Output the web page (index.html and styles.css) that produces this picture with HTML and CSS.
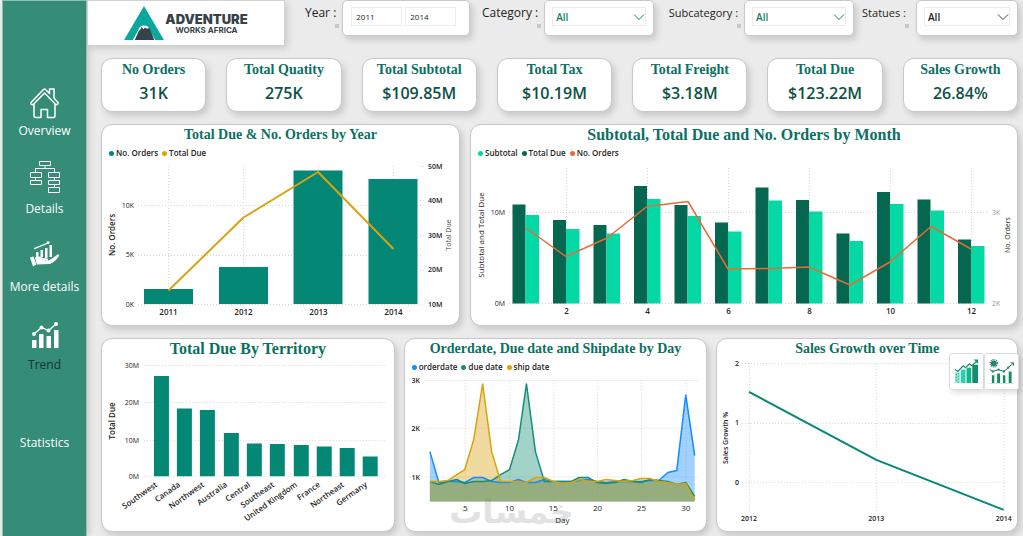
FILE: index.html
```html
<!DOCTYPE html>
<html lang="en">
<head>
    <meta charset="UTF-8">
    <meta name="viewport" content="width=device-width, initial-scale=1.0">
    <title>Adventure Works Africa - Sales Dashboard</title>
    <link rel="stylesheet" href="styles.css">
</head>
<body>
    <nav class="sidebar">
        <a href="#overview" class="nav-item">
            <svg class="nav-icon" viewBox="0 0 32 32" fill="none" stroke="currentColor" stroke-width="1.5" stroke-linejoin="round">
                <path d="M2 16.500 L14.500 3.500 Q15.500 2.500 16.500 3.500 L20.500 7.500 V3 H25 V12 L29 16.500 Q29.500 18.500 27 18.800 L15.500 7 L4 18.800 Q1 18.500 2 16.500 Z"/>
                <path d="M5 18 V30 Q5 31.500 6.500 31.500 H12 V23.500 H18.500 V31.500 H24.500 Q26 31.500 26 30 V18"/>
            </svg>
            <span>Overview</span>
        </a>
        <a href="#details" class="nav-item">
            <svg class="nav-icon" viewBox="0 3 32 32" fill="none" stroke="currentColor" stroke-width="1">
                <path d="M10.500 .5h11v4h-11z M1.500 11.500h11v5h-11z M1.500 19.500h11v4h-11z M19.500 11.500h11v5h-11z M19.500 19.500h11v4h-11z M19.500 26.500h11v5h-11z"/>
                <path d="M16 4.500V7.500M6.500 11.500V7.500H25.500V11.500M6.500 16.500V19.500M25.500 16.500V19.500M25.500 23.500V26.500"/>
            </svg>
            <span>Details</span>
        </a>
        <a href="#more" class="nav-item">
            <svg class="nav-icon" viewBox="0 0 32 32" fill="currentColor">
                <path d="M5 6 L18 .8 L17.500 -.5 L21 -.5 L19.500 2.500 L18.800 1.800 L5.500 7.200 Z"/>
                <path d="M7 10h2.500v5H7z M11.500 8h2.500v7h-2.500z M16 6h2.500v10H16z M20.500 3h2.500v12h-2.500z"/>
                <path d="M1 15.500 L4.500 14.500 L7.500 22.500 L4 24.500 Z"/>
                <path d="M6 15.500 Q10 13.500 14 16 L18 16.500 Q20 17 18.500 18.500 L14 18.800 Q20 19.500 23 16.500 L28.500 12.500 Q31 12 30 14 Q26 20 21 22 L8 22.500 Z"/>
            </svg>
            <span>More details</span>
        </a>
        <a href="#trend" class="nav-item active">
            <svg class="nav-icon" viewBox="0 0 32 32" fill="currentColor">
                <rect x="3" y="20" width="4.500" height="8" rx=".5"/>
                <rect x="10" y="14" width="4.500" height="14" rx=".5"/>
                <rect x="17.500" y="16" width="4.500" height="12" rx=".5"/>
                <rect x="25" y="10" width="4.500" height="18" rx=".5"/>
                <polyline points="5,14 12.500,7.500 19.500,10.500 27,4" fill="none" stroke="currentColor" stroke-width="1.300"/>
                <circle cx="5" cy="14" r="2"/><circle cx="12.500" cy="7.500" r="2"/>
                <circle cx="19.500" cy="10.500" r="2"/><circle cx="27" cy="4" r="2"/>
            </svg>
            <span>Trend</span>
        </a>
        <a href="#statistics" class="nav-item">
            <span>Statistics</span>
        </a>
    </nav>

    <div class="page">
        <header class="topbar">
            <div class="logo">
                <svg class="logo-mark" viewBox="0 0 42 36">
                    <path d="M20.500 0 L41 35 H32 L26.500 25 Q25.500 20 20.500 20 Q15.500 20 14.500 25 L9 35 H0 Z" fill="#08a99c"/>
                    <path d="M11 35 L15 26 L17 24 L18 21.500 L20 24 L21.500 22 L23.500 23.500 L26 22.500 L28 27 L31 35 Z" fill="#37424a"/>
                </svg>
                <div class="logo-text">
                    <strong>ADVENTURE</strong>
                    <span>WORKS AFRICA</span>
                </div>
            </div>

            <form class="filters">
                <div class="filter">
                    <label for="year-from">Year :</label>
                    <div class="filter-box filter-years">
                        <input type="text" id="year-from" value="2011">
                        <input type="text" id="year-to" value="2014" aria-label="Year to">
                    </div>
                </div>
                <div class="filter">
                    <label for="category">Category :</label>
                    <div class="filter-box">
                        <select id="category"><option>All</option></select>
                        <svg class="chevron" viewBox="0 0 12 8"><path d="M1 1.500 L6 6.500 L11 1.500"/></svg>
                    </div>
                </div>
                <div class="filter">
                    <label for="subcategory" class="label-sm">Subcategory :</label>
                    <div class="filter-box">
                        <select id="subcategory"><option>All</option></select>
                        <svg class="chevron" viewBox="0 0 12 8"><path d="M1 1.500 L6 6.500 L11 1.500"/></svg>
                    </div>
                </div>
                <div class="filter filter-last">
                    <label for="status" class="label-sm">Statues :</label>
                    <div class="filter-box filter-status">
                        <select id="status"><option>All</option></select>
                        <svg class="chevron" viewBox="0 0 12 8"><path d="M1 1.500 L6 6.500 L11 1.500"/></svg>
                    </div>
                </div>
            </form>
        </header>

        <main class="content">
            <section class="kpis">
                <div class="card kpi"><h2>No Orders</h2><p>31K</p></div>
                <div class="card kpi"><h2>Total Quatity</h2><p>275K</p></div>
                <div class="card kpi"><h2>Total Subtotal</h2><p>$109.85M</p></div>
                <div class="card kpi"><h2>Total Tax</h2><p>$10.19M</p></div>
                <div class="card kpi"><h2>Total Freight</h2><p>$3.18M</p></div>
                <div class="card kpi"><h2>Total Due</h2><p>$123.22M</p></div>
                <div class="card kpi"><h2>Sales Growth</h2><p>26.84%</p></div>
            </section>

            <section class="charts-top">
                <article class="card">
                    <h2>Total Due &amp; No. Orders by Year</h2>
                    <ul class="legend">
                        <li class="c-teal">No. Orders</li>
                        <li class="c-gold">Total Due</li>
                    </ul>
                    <svg class="chart" viewBox="102 161 357 164">
                        <path class="grid" d="M138 205.500H422M138 255.500H422M138 304.500H422M168.500 166V304M243.500 166V304M318.500 166V304M393.500 166V304M420 166.500H424M420 200.500H424M420 235.500H424M420 270.500H424"/>
                        <g fill="#058776">
                            <rect x="144" y="289" width="49" height="15"/>
                            <rect x="219" y="267" width="49" height="37"/>
                            <rect x="293.500" y="170.500" width="49" height="133.500"/>
                            <rect x="368.500" y="179" width="49" height="125"/>
                        </g>
                        <polyline class="line gold" points="168.500,290.500 243.500,217.500 318,172 393.500,249"/>
                        <g class="dark small end">
                            <text x="134" y="208">10K</text>
                            <text x="134" y="257">5K</text>
                            <text x="134" y="307">0K</text>
                        </g>
                        <g class="bold small">
                            <text x="428" y="169">50M</text>
                            <text x="428" y="203">40M</text>
                            <text x="428" y="238">30M</text>
                            <text x="428" y="272">20M</text>
                            <text x="428" y="307">10M</text>
                        </g>
                        <g class="bold mid">
                            <text x="168.500" y="315">2011</text>
                            <text x="243.500" y="315">2012</text>
                            <text x="318.500" y="315">2013</text>
                            <text x="393.500" y="315">2014</text>
                        </g>
                        <text class="bold axis" transform="translate(115 235) rotate(-90)">No. Orders</text>
                        <text class="soft axis small" transform="translate(451 235) rotate(-90)">Total Due</text>
                    </svg>
                </article>

                <article class="card">
                    <h2 class="title-lg">Subtotal, Total Due and No. Orders by Month</h2>
                    <ul class="legend">
                        <li class="c-mint">Subtotal</li>
                        <li class="c-forest">Total Due</li>
                        <li class="c-orange">No. Orders</li>
                    </ul>
                    <svg class="chart" viewBox="471 161 546 164">
                        <path class="grid" d="M509 212.500H988M509 303.500H988M566.500 168V303M647.500 168V303M728.500 168V303M809.500 168V303M890.500 168V303M971.500 168V303"/>
                        <path fill="#05674f" d="M512.500 303.500V204.500h13V303.500z M553 303.500V220h13V303.500z M593.500 303.500V225h13V303.500z M634 303.500V186h13V303.500z M674.500 303.500V205h13V303.500z M715 303.500V222.500h13V303.500z M755.500 303.500V187.500h13V303.500z M796 303.500V200h13V303.500z M836.500 303.500V233.500h13V303.500z M877 303.500V192h13V303.500z M917.500 303.500V199.500h13V303.500z M958 303.500V239.500h13V303.500z"/>
                        <path fill="#04d9a5" d="M525.500 303.500V215h13.500V303.500z M566 303.500V229h13.500V303.500z M606.500 303.500V233.500h13.500V303.500z M647 303.500V199h13.500V303.500z M687.500 303.500V216h13.500V303.500z M728 303.500V231.500h13.500V303.500z M768.500 303.500V200.500h13.500V303.500z M809 303.500V211.500h13.500V303.500z M849.500 303.500V241h13.500V303.500z M890 303.500V204h13.500V303.500z M930.500 303.500V210.500h13.500V303.500z M971 303.500V246h13.500V303.500z"/>
                        <polyline class="line orange" points="526,228 566,256.500 607,238 647,206.500 688,201.500 728,269 769,268.500 809,267 850,285 890,262 931,226.500 971,249"/>
                        <g class="dark small end">
                            <text x="505" y="215">10M</text>
                            <text x="505" y="306">0M</text>
                        </g>
                        <g class="pale small">
                            <text x="992" y="215">3K</text>
                            <text x="992" y="306">2K</text>
                        </g>
                        <g class="bold mid">
                            <text x="566.500" y="314">2</text>
                            <text x="647.500" y="314">4</text>
                            <text x="728.500" y="314">6</text>
                            <text x="809.500" y="314">8</text>
                            <text x="890.500" y="314">10</text>
                            <text x="971.500" y="314">12</text>
                        </g>
                        <text class="dark axis" transform="translate(484 235) rotate(-90)">Subtotal and Total Due</text>
                        <text class="dark axis small" transform="translate(1010 235) rotate(-90)">No. Orders</text>
                    </svg>
                </article>
            </section>

            <section class="charts-bottom">
                <article class="card">
                    <h2 class="title-lg">Total Due By Territory</h2>
                    <svg class="chart" viewBox="102 359 292 172">
                        <path class="grid" d="M144 365.500H386M144 402.500H386M144 440.500H386M144 476.500H386"/>
                        <path fill="#058776" d="M154 476.500V376h15V476.500z M177 476.500V408.500h15V476.500z M200 476.500V410h15V476.500z M224 476.500V433h15V476.500z M247 476.500V443.500h15V476.500z M270 476.500V444h15V476.500z M294 476.500V445h15V476.500z M317 476.500V446.500h15V476.500z M340 476.500V448h15V476.500z M363 476.500V456.500h15V476.500z"/>
                        <g class="dark small end">
                            <text x="139" y="368">30M</text>
                            <text x="139" y="405">20M</text>
                            <text x="139" y="443">10M</text>
                            <text x="139" y="479">0M</text>
                        </g>
                        <g class="bold end">
                            <text transform="translate(158 486) rotate(-35)">Southwest</text>
                            <text transform="translate(181 486) rotate(-35)">Canada</text>
                            <text transform="translate(205 486) rotate(-35)">Northwest</text>
                            <text transform="translate(228 486) rotate(-35)">Australia</text>
                            <text transform="translate(251 486) rotate(-35)">Central</text>
                            <text transform="translate(275 486) rotate(-35)">Southeast</text>
                            <text transform="translate(298 486) rotate(-35)">United Kingdom</text>
                            <text transform="translate(321 486) rotate(-35)">France</text>
                            <text transform="translate(345 486) rotate(-35)">Northeast</text>
                            <text transform="translate(368 486) rotate(-35)">Germany</text>
                        </g>
                        <text class="bold axis" transform="translate(115 421) rotate(-90)">Total Due</text>
                    </svg>
                </article>

                <article class="card">
                    <h2>Orderdate, Due date and Shipdate by Day</h2>
                    <ul class="legend">
                        <li class="c-blue">orderdate</li>
                        <li class="c-green">due date</li>
                        <li class="c-gold">ship date</li>
                    </ul>
                    <svg class="chart" viewBox="405 375 303 156">
                        <path class="rule" d="M425 380.500H700M425 428.500H700M425 477.500H700"/>
                        <path class="grid" d="M465.500 380V502M510.500 380V502M554.500 380V502M598.500 380V502M642.500 380V502M687.500 380V502"/>
                        <text class="watermark" x="512" y="524">خمسات</text>
                        <g fill-opacity=".4">
                            <polygon fill="#118dff" points="430,502 430,452 439,483 448,482 457,482 465,483 474,478 483,478 492,482 501,483 510,483 519,480 527,483 536,483 545,480 554,482 563,482 572,482 580,481 589,480 598,482 607,483 616,482 625,482 634,482 642,482 651,481 660,481 669,473 678,471 687,395 696,456 696,502"/>
                            <polygon fill="#178f75" points="430,502 430,482 439,485 448,482 457,480 465,484 474,482 483,482 492,481 501,475 510,470 519,440 527,384 536,452 545,482 554,482 563,482 572,482 580,478 589,478 598,483 607,484 616,483 625,480 634,482 642,483 651,480 660,481 669,482 678,485 687,483 696,497 696,502"/>
                            <polygon fill="#d9a310" points="430,502 430,482 439,482 448,481 457,475 465,470 474,440 483,384 492,452 501,482 510,482 519,482 527,483 536,478 545,478 554,482 563,484 572,483 580,480 589,482 598,482 607,480 616,481 625,482 634,481 642,479 651,479 660,482 669,483 678,485 687,484 696,501 696,502"/>
                        </g>
                        <polyline class="line thin blue" points="430,452 439,483 448,482 457,482 465,483 474,478 483,478 492,482 501,483 510,483 519,480 527,483 536,483 545,480 554,482 563,482 572,482 580,481 589,480 598,482 607,483 616,482 625,482 634,482 642,482 651,481 660,481 669,473 678,471 687,395 696,456"/>
                        <polyline class="line thin green" points="430,482 439,485 448,482 457,480 465,484 474,482 483,482 492,481 501,475 510,470 519,440 527,384 536,452 545,482 554,482 563,482 572,482 580,478 589,478 598,483 607,484 616,483 625,480 634,482 642,483 651,480 660,481 669,482 678,485 687,483 696,497"/>
                        <polyline class="line thin gold" points="430,482 439,482 448,481 457,475 465,470 474,440 483,384 492,452 501,482 510,482 519,482 527,483 536,478 545,478 554,482 563,484 572,483 580,480 589,482 598,482 607,480 616,481 625,482 634,481 642,479 651,479 660,482 669,483 678,485 687,484 696,501"/>
                        <g class="bold small end">
                            <text x="420" y="383">3K</text>
                            <text x="420" y="431">2K</text>
                            <text x="420" y="480">1K</text>
                        </g>
                        <g class="dark mid">
                            <text x="465.500" y="512">5</text>
                            <text x="510" y="512">10</text>
                            <text x="554" y="512">15</text>
                            <text x="598.500" y="512">20</text>
                            <text x="642.500" y="512">25</text>
                            <text x="687" y="512">30</text>
                            <text x="563" y="524">Day</text>
                        </g>
                    </svg>
                </article>

                <article class="card">
                    <h2>Sales Growth over Time</h2>
                    <svg class="chart" viewBox="717 359 300 172">
                        <path class="grid" d="M742 363.500H1008M742 423.500H1008M742 482.500H1008M749.500 363V512M876.500 363V512M1004.500 363V512"/>
                        <polyline class="line teal" points="749,392 876.500,460 1004,510"/>
                        <g class="bold small mid">
                            <text x="737" y="366">2</text>
                            <text x="737" y="425">1</text>
                            <text x="737" y="485">0</text>
                            <text x="749" y="521">2012</text>
                            <text x="876.500" y="521">2013</text>
                            <text x="1004" y="521">2014</text>
                        </g>
                        <text class="bold axis small" transform="translate(728 438) rotate(-90)">Sales Growth %</text>
                    </svg>
                    <div class="switcher">
                        <button type="button" aria-label="Growth chart">
                            <svg viewBox="0 0 26 26">
                                <rect x="1" y="14" width="5" height="11" fill="#7fe9d4"/>
                                <rect x="7" y="11" width="5" height="14" fill="#35d9b3"/>
                                <rect x="13" y="9" width="5" height="16" fill="#12bd92"/>
                                <rect x="19" y="6" width="6" height="19" fill="#158c6e"/>
                                <path d="M2.500 15.500v9M4.500 14.500v10M8.500 12.500v12M10.500 11.500v13M14.500 10.500v14M16.500 9.500v15" stroke="#168b73" stroke-width=".8" stroke-dasharray="1 2"/>
                                <path d="M1 11 L4 13 L9.500 7 L12 9 L16 5 L18.500 7 L24 2" fill="none" stroke="#168b73" stroke-width="1.300"/>
                                <path d="M20.500 .5H25V5z" fill="#168b73"/>
                            </svg>
                        </button>
                        <button type="button" aria-label="Trend chart">
                            <svg viewBox="0 0 26 26">
                                <circle cx="5" cy="4.500" r="3" fill="#168b73"/>
                                <circle cx="5" cy="4.500" r="3.800" fill="none" stroke="#1c4f45" stroke-width="1.200" stroke-dasharray="1 1"/>
                                <path d="M3 17h2.500v8H3z M8.500 15h3v10h-3z M14.500 17h2.500v8h-2.500z M20.500 13h3v12h-3z" fill="#168b60"/>
                                <path d="M1 11 L4 13 L10 11 L15.500 13 L25 4.500 M22.500 4H25.500V7" fill="none" stroke="#1f6e5d" stroke-width="1"/>
                                <circle cx="4" cy="13" r="1.200" fill="#168b73"/><circle cx="10" cy="11" r="1.200" fill="#168b73"/><circle cx="15.500" cy="13" r="1.200" fill="#168b73"/><circle cx="20" cy="9" r="1.200" fill="#168b73"/>
                                <path d="M0 25.500H26" stroke="#c4e6df"/>
                            </svg>
                        </button>
                    </div>
                </article>
            </section>
        </main>
    </div>
</body>
</html>
```
FILE: styles.css
```css
* {
    box-sizing: border-box;
}
body {
    display: flex;
    margin: 0;
    padding-left: 2px;
    min-height: 100vh;
    background: #ebebeb;
    color: #252423;
    font-family: "Open Sans", "Noto Sans", sans-serif;
}
h2, p, ul {
    margin: 0;
    padding: 0;
}

/* sidebar */
.sidebar {
    flex: none;
    width: 85px;
    padding-top: 61px;
    background: #358c77;
    border: 1px solid #8fc0b2;
    border-bottom: 0;
    box-shadow: 3px 0 6px rgba(0,0,0,0.12);
}
.nav-item {
    display: flex;
    flex-direction: column;
    align-items: center;
    justify-content: flex-end;
    gap: 4px;
    height: 78px;
    color: white;
    font-size: 12px;
    line-height: 18px;
    text-decoration: none;
    white-space: nowrap;
}
.nav-icon {
    width: 32px;
    height: 32px;
    overflow: visible;
}
.nav-item.active span {
    color: #12352d;
}

/* top bar */
.page {
    flex: 1;
    min-width: 0;
}
.topbar {
    display: flex;
    gap: 20px;
    height: 46px;
    padding-right: 5px;
}
.logo {
    display: flex;
    flex: none;
    align-items: center;
    justify-content: center;
    width: 198px;
    background: white;
    border: 1px solid #d2d2d2;
    box-shadow: 3px 3px 6px rgba(0,0,0,0.12);
}
.logo-mark {
    width: 41px;
    height: 35px;
}
.logo-text {
    display: flex;
    flex-direction: column;
    align-items: center;
    color: #37424a;
    font-family: Inter, sans-serif;
}
.logo-text strong {
    font-size: 13px;
    font-weight: 900;
    line-height: 13px;
}
.logo-text span {
    font-size: 8px;
    font-weight: 700;
    line-height: 8px;
}
.filters {
    flex: 1;
    display: grid;
    grid-template-columns: 162fr 176fr 192fr 156fr;
    gap: 8px;
}
.filter {
    display: flex;
    justify-content: flex-end;
    gap: 6px;
}
.filter-last {
    justify-content: space-between;
}
.filter label {
    position: relative;
    height: 24px;
    padding-top: 4px;
    font-size: 12px;
    line-height: 18px;
    white-space: nowrap;
}
.filter .label-sm {
    font-size: 11px;
}
.filter label::after {
    content: "";
    position: absolute;
    right: -3px;
    bottom: -4px;
    width: 4px;
    height: 4px;
    background: #c8c8c8;
}
.filter-box {
    position: relative;
    width: 110px;
    height: 36px;
    padding: 6px 7px 9px;
    background: white;
    border: 1px solid #c8c8c8;
    border-radius: 5px;
    box-shadow: 3px 4px 6px rgba(0,0,0,0.14);
}
.filter-years {
    display: flex;
    gap: 3px;
    width: 128px;
    padding-right: 13px;
    padding-left: 8px;
}
.filter-status {
    width: 102px;
}
.filter-box input,
.filter-box select {
    display: block;
    width: 100%;
    min-width: 0;
    height: 19px;
    padding: 0 4px;
    background: white;
    border: 1px solid #ececec;
    border-radius: 0;
    font-family: inherit;
    font-size: 8px;
    color: #252423;
}
.filter-box select {
    appearance: none;
    color: #12806b;
    font-size: 10px;
    font-weight: 600;
    line-height: 16px;
    padding: 0 3px;
}
.filter-box.filter-status select {
    color: #252423;
}
.chevron {
    position: absolute;
    top: 12px;
    right: 8px;
    width: 12px;
    height: 8px;
    fill: none;
    stroke: #12806b;
    pointer-events: none;
}
.filter-status .chevron {
    stroke: #444;
}

/* cards */
.content {
    display: flex;
    flex-direction: column;
    gap: 12px;
    padding: 12px 5px 4px 14px;
}
.card {
    position: relative;
    min-width: 0;
    background: white;
    border: 1px solid #c8c8c8;
    border-radius: 11px;
    box-shadow: 3px 4px 6px rgba(0,0,0,0.14);
}
.card h2 {
    color: #0b7062;
    font-family: "Liberation Serif", serif;
    font-size: 14px;
    font-weight: 700;
    line-height: 20px;
    text-align: center;
    white-space: nowrap;
}
.card h2.title-lg {
    font-size: 16px;
}
.kpis {
    display: grid;
    grid-template-columns: 105fr repeat(6, 115fr);
    gap: 20px;
}
.kpi {
    height: 54px;
    padding-top: 1px;
}
.kpi p {
    color: #0e5247;
    font-size: 16px;
    font-weight: 600;
    line-height: 26px;
    text-align: center;
}
.charts-top {
    display: grid;
    grid-template-columns: 359fr 548fr;
    gap: 10px;
}
.charts-bottom {
    display: grid;
    grid-template-columns: 294fr 304fr 302fr;
    gap: 9px;
}

/* legends */
.legend {
    display: flex;
    gap: 4px;
    height: 16px;
    padding-left: 7px;
    list-style: none;
    font-size: 8px;
    font-weight: 600;
    line-height: 16px;
}
.legend li {
    display: flex;
    align-items: center;
    gap: 2px;
}
.legend li::before {
    content: "";
    width: 5px;
    height: 5px;
    border-radius: 50%;
    background: var(--dot);
}
.c-teal { --dot: #058776; }
.c-gold { --dot: #d9a310; }
.c-mint { --dot: #04d9a5; }
.c-forest { --dot: #05674f; }
.c-orange { --dot: #e66c37; }
.c-blue { --dot: #118dff; }
.c-green { --dot: #178f75; }

/* charts */
.chart {
    display: block;
    width: 100%;
    height: auto;
    overflow: visible;
}
.chart text {
    font-size: 8px;
}
.grid {
    fill: none;
    stroke: #d4d4d4;
    stroke-dasharray: 1 2;
}
.rule {
    fill: none;
    stroke: #f0f0f0;
}
.line {
    fill: none;
    stroke-width: 2;
    stroke-linejoin: round;
}
.line.thin { stroke-width: 1.5; }
.line.gold { stroke: #d9a310; }
.line.teal { stroke: #058776; }
.line.green { stroke: #178f75; }
.line.blue { stroke: #118dff; }
.line.orange { stroke: #e66c37; stroke-width: 1.5; }
.dark { fill: #252423; font-weight: 500; }
.bold { fill: #252423; font-weight: 600; }
.soft { fill: #484644; }
.pale { fill: #999; }
.end { text-anchor: end; }
.mid, .axis { text-anchor: middle; }
.chart .small,
.chart .small text {
    font-size: 7px;
}
.chart .watermark {
    fill: #e2e2e2;
    font-family: "DejaVu Sans", sans-serif;
    font-size: 33px;
    font-weight: 700;
    text-anchor: middle;
}

/* chart type buttons over the last card */
.switcher {
    position: absolute;
    top: 14px;
    right: -2px;
    display: flex;
}
.switcher button {
    width: 35px;
    height: 37px;
    padding: 4px;
    background: rgba(255,255,255,0.9);
    border: 1px solid #dcdcdc;
    border-radius: 3px;
    box-shadow: 2px 3px 5px rgba(0,0,0,0.12);
}
.switcher svg {
    display: block;
    width: 25px;
    height: 25px;
}
```
